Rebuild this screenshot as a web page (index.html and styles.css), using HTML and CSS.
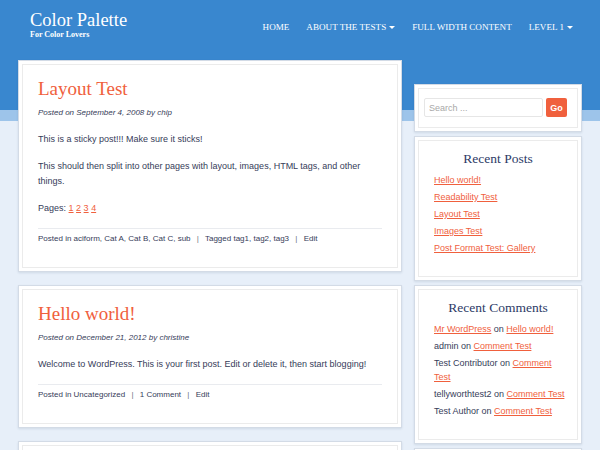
FILE: index.html
```html
<!DOCTYPE html>
<html lang="en">
<head>
  <meta charset="UTF-8" />
  <meta name="viewport" content="width=device-width, initial-scale=1" />
  <title>Color Palette | For Color Lovers</title>
  <link rel="stylesheet" href="styles.css">
</head>
<body>

  <header class="site-header">
    <div class="branding">
      <div class="site-title">Color Palette</div>
      <div class="site-desc">For Color Lovers</div>
    </div>
    <nav class="main-nav">
      <a href="#">Home</a>
      <a href="#" class="has-sub">About The Tests</a>
      <a href="#">Full Width Content</a>
      <a href="#" class="has-sub">Level 1</a>
    </nav>
  </header>

  <div class="wrap">
    <main class="content">

      <article class="post">
        <div class="post-inner">
          <h1 class="post-title">Layout Test</h1>
          <div class="post-meta">Posted on September 4, 2008 by chip</div>
          <p>This is a sticky post!!! Make sure it sticks!</p>
          <p>This should then split into other pages with layout, images, HTML tags, and other things.</p>
          <p>Pages: <a href="#">1</a> <a href="#">2</a> <a href="#">3</a> <a href="#">4</a></p>
          <div class="post-footer">
            Posted in <a href="#">aciform</a>, <a href="#">Cat A</a>, <a href="#">Cat B</a>, <a href="#">Cat C</a>, <a href="#">sub</a>
            <span class="sep">|</span>
            Tagged <a href="#">tag1</a>, <a href="#">tag2</a>, <a href="#">tag3</a>
            <span class="sep">|</span>
            <a href="#">Edit</a>
          </div>
        </div>
      </article>

      <article class="post">
        <div class="post-inner">
          <h1 class="post-title">Hello world!</h1>
          <div class="post-meta">Posted on December 21, 2012 by christine</div>
          <p>Welcome to WordPress. This is your first post. Edit or delete it, then start blogging!</p>
          <div class="post-footer">
            Posted in <a href="#">Uncategorized</a>
            <span class="sep">|</span>
            <a href="#">1 Comment</a>
            <span class="sep">|</span>
            <a href="#">Edit</a>
          </div>
        </div>
      </article>

      <article class="post">
        <div class="post-inner">
          <h1 class="post-title">Readability Test</h1>
        </div>
      </article>

    </main>

    <aside class="sidebar">
      <div class="widget">
        <form class="search-form widget-inner" onsubmit="return false">
          <input type="search" placeholder="Search ..." />
          <button type="submit">Go</button>
        </form>
      </div>

      <div class="widget">
        <div class="widget-inner">
          <h3 class="widget-title">Recent Posts</h3>
          <ul>
            <li><a href="#">Hello world!</a></li>
            <li><a href="#">Readability Test</a></li>
            <li><a href="#">Layout Test</a></li>
            <li><a href="#">Images Test</a></li>
            <li><a href="#">Post Format Test: Gallery</a></li>
          </ul>
        </div>
      </div>

      <div class="widget">
        <div class="widget-inner">
          <h3 class="widget-title">Recent Comments</h3>
          <ul>
            <li><a href="#">Mr WordPress</a> on <a href="#">Hello world!</a></li>
            <li>admin on <a href="#">Comment Test</a></li>
            <li>Test Contributor on <a href="#">Comment Test</a></li>
            <li>tellyworthtest2 on <a href="#">Comment Test</a></li>
            <li>Test Author on <a href="#">Comment Test</a></li>
          </ul>
        </div>
      </div>

      <div class="widget">
        <div class="widget-inner">
          <h3 class="widget-title">Archives</h3>
        </div>
      </div>
    </aside>
  </div>

</body>
</html>
```

FILE: styles.css
```css
:root {
  --azul: #3987cf;
  --faixa: #9dc4ea;
  --fundo: #e7eff9;
  --laranja: #f0603d;
  --texto: #363c59;
  --titulo: #2d3a66;
}

* {
  box-sizing: border-box;
  margin: 0;
  padding: 0;
}

body {
  font-family: 'Liberation Sans', Arial, sans-serif;
  color: var(--texto);
  background: linear-gradient(to bottom,
    var(--azul) 0, var(--azul) 110px,
    var(--faixa) 110px, var(--faixa) 121px,
    var(--fundo) 121px);
  background-color: var(--fundo);
  min-height: 100vh;
}

a {
  color: var(--laranja);
}

/* cabecalho */
.site-header {
  height: 60px;
  padding: 11px 27px 0 30px;
  display: flex;
  justify-content: space-between;
  align-items: flex-start;
  color: white;
}

.site-title {
  font-family: 'Liberation Serif', serif;
  font-size: 18.5px;
  line-height: 19px;
}

.site-desc {
  font-family: 'Liberation Serif', serif;
  font-size: 8px;
  font-weight: bold;
  line-height: 9px;
}

.main-nav {
  display: flex;
  gap: 17px;
  margin-top: 10px;
}

.main-nav a {
  color: white;
  text-decoration: none;
  text-transform: uppercase;
  font-family: 'Liberation Serif', serif;
  font-size: 9.1px;
  line-height: 12px;
  display: flex;
  align-items: center;
}

.main-nav a.has-sub::after {
  content: '';
  margin-left: 3px;
  border-left: 3px solid transparent;
  border-right: 3px solid transparent;
  border-top: 3px solid white;
}

/* layout */
.wrap {
  display: flex;
  gap: 12px;
  padding: 0 18px;
  align-items: flex-start;
}

.content {
  width: 384px;
  flex-shrink: 0;
}

.sidebar {
  width: 168px;
  flex-shrink: 0;
  margin-top: 24px;
}

/* posts */
.post,
.widget {
  background-color: white;
  border: 1px solid #d3dbe6;
  box-shadow: 0 1px 2px rgba(40, 70, 110, 0.12);
  padding: 3px;
}

.post {
  margin-bottom: 13px;
}

.post-inner {
  border: 1px solid #ebebeb;
  padding: 12px 15px 22px;
}

.post-title {
  font-family: 'Liberation Serif', serif;
  font-weight: normal;
  font-size: 19px;
  line-height: 24px;
  color: var(--laranja);
}

.post-meta {
  font-size: 8px;
  font-style: italic;
  line-height: 12px;
  margin: 6px 0 13px;
}

.post-inner p {
  font-size: 9px;
  line-height: 15px;
  margin-bottom: 12px;
}

.post-footer {
  border-top: 1px solid #e9ebef;
  padding-top: 4px;
  font-size: 8px;
  line-height: 12px;
}

.post-footer a {
  color: var(--texto);
  text-decoration: none;
}

.sep {
  color: #6d7185;
  margin: 0 4px;
}

/* sidebar */
.widget {
  margin-bottom: 4px;
}

.widget-inner {
  border: 1px solid #ebebeb;
  padding: 9px 8px 18px 15px;
}

.search-form {
  display: flex;
  gap: 3px;
  padding: 9px 10px 10px 5px;
}

.search-form input {
  flex: 1;
  min-width: 0;
  height: 19px;
  border: 1px solid #e6e6e6;
  border-radius: 2px;
  padding: 0 4px;
  font-family: 'Liberation Sans', Arial, sans-serif;
  font-size: 9px;
  color: var(--texto);
  outline: none;
}

.search-form input::placeholder {
  color: #a8a8a8;
}

.search-form button {
  width: 21px;
  height: 19px;
  border: none;
  border-radius: 2px;
  background-color: var(--laranja);
  color: white;
  font-family: 'Liberation Sans', Arial, sans-serif;
  font-size: 9px;
  font-weight: bold;
  cursor: pointer;
}

.widget-title {
  font-family: 'Liberation Serif', serif;
  font-weight: normal;
  font-size: 13.5px;
  line-height: 18px;
  text-align: center;
  color: var(--titulo);
  margin: 0 -8px 5px -15px;
}

.widget ul {
  list-style: none;
}

.widget li {
  font-size: 9px;
  line-height: 14px;
  margin-bottom: 3px;
}
```
